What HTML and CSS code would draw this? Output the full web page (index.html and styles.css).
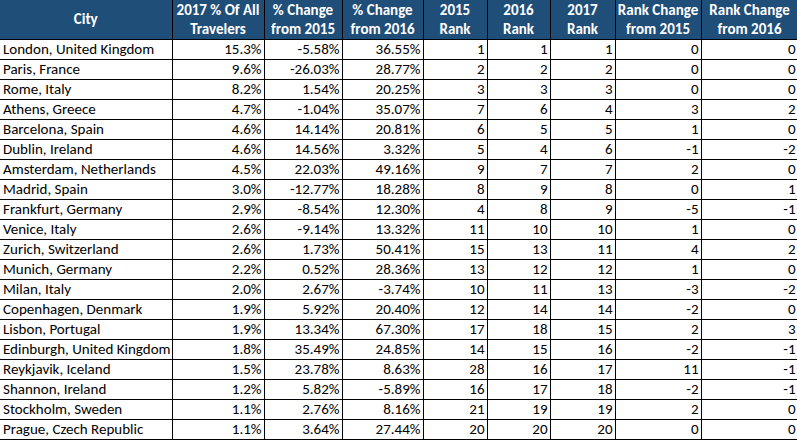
FILE: index.html
```html
<!DOCTYPE html>
<html>
<head>
<meta charset="utf-8">
<link rel="stylesheet" href="styles.css">
</head>
<body>
<table class="grid">
  <colgroup>
    <col class="c1"><col class="c2"><col class="c3"><col class="c4"><col class="c5"><col class="c6"><col class="c7"><col class="c8"><col class="c9">
  </colgroup>
  <thead>
    <tr>
      <th>City</th>
      <th>2017 % Of All<br>Travelers</th>
      <th>% Change<br>from 2015</th>
      <th>% Change<br>from 2016</th>
      <th>2015<br>Rank</th>
      <th>2016<br>Rank</th>
      <th>2017<br>Rank</th>
      <th>Rank Change<br>from 2015</th>
      <th>Rank Change<br>from 2016</th>
    </tr>
  </thead>
  <tbody>
    <tr><td>London, United Kingdom</td><td>15.3%</td><td>-5.58%</td><td>36.55%</td><td>1</td><td>1</td><td>1</td><td>0</td><td>0</td></tr>
    <tr><td>Paris, France</td><td>9.6%</td><td>-26.03%</td><td>28.77%</td><td>2</td><td>2</td><td>2</td><td>0</td><td>0</td></tr>
    <tr><td>Rome, Italy</td><td>8.2%</td><td>1.54%</td><td>20.25%</td><td>3</td><td>3</td><td>3</td><td>0</td><td>0</td></tr>
    <tr><td>Athens, Greece</td><td>4.7%</td><td>-1.04%</td><td>35.07%</td><td>7</td><td>6</td><td>4</td><td>3</td><td>2</td></tr>
    <tr><td>Barcelona, Spain</td><td>4.6%</td><td>14.14%</td><td>20.81%</td><td>6</td><td>5</td><td>5</td><td>1</td><td>0</td></tr>
    <tr><td>Dublin, Ireland</td><td>4.6%</td><td>14.56%</td><td>3.32%</td><td>5</td><td>4</td><td>6</td><td>-1</td><td>-2</td></tr>
    <tr><td>Amsterdam, Netherlands</td><td>4.5%</td><td>22.03%</td><td>49.16%</td><td>9</td><td>7</td><td>7</td><td>2</td><td>0</td></tr>
    <tr><td>Madrid, Spain</td><td>3.0%</td><td>-12.77%</td><td>18.28%</td><td>8</td><td>9</td><td>8</td><td>0</td><td>1</td></tr>
    <tr><td>Frankfurt, Germany</td><td>2.9%</td><td>-8.54%</td><td>12.30%</td><td>4</td><td>8</td><td>9</td><td>-5</td><td>-1</td></tr>
    <tr><td>Venice, Italy</td><td>2.6%</td><td>-9.14%</td><td>13.32%</td><td>11</td><td>10</td><td>10</td><td>1</td><td>0</td></tr>
    <tr><td>Zurich, Switzerland</td><td>2.6%</td><td>1.73%</td><td>50.41%</td><td>15</td><td>13</td><td>11</td><td>4</td><td>2</td></tr>
    <tr><td>Munich, Germany</td><td>2.2%</td><td>0.52%</td><td>28.36%</td><td>13</td><td>12</td><td>12</td><td>1</td><td>0</td></tr>
    <tr><td>Milan, Italy</td><td>2.0%</td><td>2.67%</td><td>-3.74%</td><td>10</td><td>11</td><td>13</td><td>-3</td><td>-2</td></tr>
    <tr><td>Copenhagen, Denmark</td><td>1.9%</td><td>5.92%</td><td>20.40%</td><td>12</td><td>14</td><td>14</td><td>-2</td><td>0</td></tr>
    <tr><td>Lisbon, Portugal</td><td>1.9%</td><td>13.34%</td><td>67.30%</td><td>17</td><td>18</td><td>15</td><td>2</td><td>3</td></tr>
    <tr><td>Edinburgh, United Kingdom</td><td>1.8%</td><td>35.49%</td><td>24.85%</td><td>14</td><td>15</td><td>16</td><td>-2</td><td>-1</td></tr>
    <tr><td>Reykjavik, Iceland</td><td>1.5%</td><td>23.78%</td><td>8.63%</td><td>28</td><td>16</td><td>17</td><td>11</td><td>-1</td></tr>
    <tr><td>Shannon, Ireland</td><td>1.2%</td><td>5.82%</td><td>-5.89%</td><td>16</td><td>17</td><td>18</td><td>-2</td><td>-1</td></tr>
    <tr><td>Stockholm, Sweden</td><td>1.1%</td><td>2.76%</td><td>8.16%</td><td>21</td><td>19</td><td>19</td><td>2</td><td>0</td></tr>
    <tr><td>Prague, Czech Republic</td><td>1.1%</td><td>3.64%</td><td>27.44%</td><td>20</td><td>20</td><td>20</td><td>0</td><td>0</td></tr>
  </tbody>
</table>
</body>
</html>
```

FILE: styles.css
```css
html, body {
  margin: 0;
  padding: 0;
  background: #ffffff;
  overflow: hidden;
}

.grid {
  border-collapse: collapse;
  table-layout: fixed;
  width: 798px;
  font-family: Carlito, Calibri, Lato, "Open Sans", sans-serif;
  font-size: 15px;
  color: #000;
}

.c1 { width: 172px; }
.c2 { width: 92px; }
.c3 { width: 78px; }
.c4 { width: 81px; }
.c5 { width: 64px; }
.c6 { width: 63px; }
.c7 { width: 65px; }
.c8 { width: 86px; }
.c9 { width: 97px; }

.grid th {
  background: #1f4e78;
  color: #ffffff;
  font-weight: bold;
  text-align: center;
  vertical-align: middle;
  height: 39px;
  padding: 0;
  line-height: 19px;
  border-right: 1px solid #000;
  border-bottom: 1px solid #000;
  white-space: nowrap;
  overflow: hidden;
}

.grid td {
  height: 19px;
  padding: 0 2px 0 3px;
  line-height: 19px;
  text-align: right;
  vertical-align: bottom;
  border-right: 1px solid #000;
  border-bottom: 1px solid #000;
  white-space: nowrap;
  overflow: hidden;
}

.grid td:first-child {
  text-align: left;
}
```
